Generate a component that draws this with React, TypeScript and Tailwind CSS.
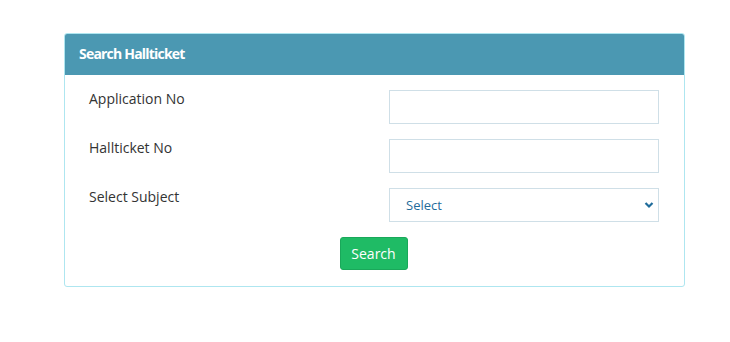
import { useState } from 'react'

const font = { fontFamily: '"Open Sans", "Noto Sans", sans-serif' }

function FieldRow({ label, children }: { label: string; children: React.ReactNode }) {
  return (
    <div className="flex items-start">
      <label className="flex-1 pl-[24px] text-[14px] leading-[18px] text-[#333]">
        {label}
      </label>
      <div className="mr-[25px] w-[270px]">{children}</div>
    </div>
  )
}

export default function App() {
  const [appNo, setAppNo] = useState('')
  const [ticketNo, setTicketNo] = useState('')
  const [subject, setSubject] = useState('')

  return (
    <div className="h-[342px] w-[730px] bg-white" style={font}>
      <div className="pl-[64px] pt-[33px]">
        <div className="w-[621px] overflow-hidden rounded-[3px] border border-[#aee6f0]">
          <div className="flex h-[41px] items-center bg-[#4b98b2] pb-[2px] pl-[14px] text-[14px] font-bold tracking-[-0.8px] text-white">
            Search Hallticket
          </div>
          <div className="flex flex-col gap-[15px] pb-[16px] pt-[15px]">
            <FieldRow label="Application No">
              <input
                value={appNo}
                onChange={(e) => setAppNo(e.target.value)}
                className="block h-[34px] w-full border border-[#cfdfe7] px-3 text-[13px] outline-none"
              />
            </FieldRow>
            <FieldRow label="Hallticket No">
              <input
                value={ticketNo}
                onChange={(e) => setTicketNo(e.target.value)}
                className="block h-[34px] w-full border border-[#cfdfe7] px-3 text-[13px] outline-none"
              />
            </FieldRow>
            <FieldRow label="Select Subject">
              <div className="relative">
                <select
                  value={subject}
                  onChange={(e) => setSubject(e.target.value)}
                  className="block h-[34px] w-full appearance-none border border-[#cfdfe7] bg-white pl-[16px] pt-[2px] text-[13px] text-[#1f6c9b] outline-none"
                >
                  <option value="">Select</option>
                </select>
                <svg
                  className="pointer-events-none absolute right-[5px] top-[13px]"
                  width="10"
                  height="8"
                  viewBox="0 0 10 8"
                >
                  <path d="M1.5 2 L5 5.5 L8.5 2" stroke="#1f6c9b" strokeWidth="2.2" fill="none" />
                </svg>
              </div>
            </FieldRow>
            <div className="flex justify-center pr-[2px]">
              <button className="h-[33px] w-[68px] rounded-[3px] border border-[#1aa85a] bg-[#1fbb65] text-[14px] text-white">
                Search
              </button>
            </div>
          </div>
        </div>
      </div>
    </div>
  )
}
